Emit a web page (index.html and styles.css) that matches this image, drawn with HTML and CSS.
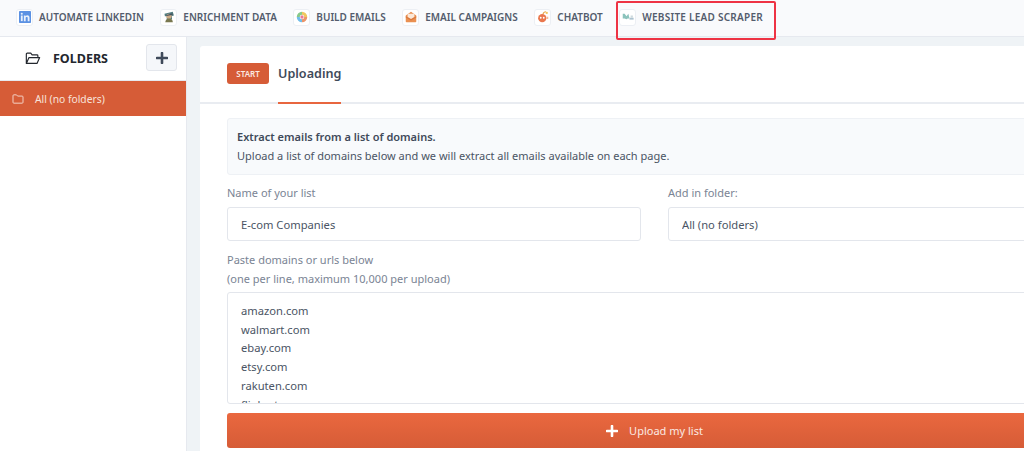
FILE: index.html
```html
<!DOCTYPE html>
<html lang="en">
<head>
<meta charset="utf-8">
<title>Website Lead Scraper</title>
<link rel="stylesheet" href="styles.css">
</head>
<body>
<nav class="topnav">
  <a class="navitem">
    <span class="navicon"><svg viewBox="0 0 16 16"><rect width="16" height="16" rx="1" fill="#4a86e0"/><rect x="2.5" y="6" width="2.4" height="7.5" fill="#e6effb"/><circle cx="3.7" cy="3.7" r="1.4" fill="#e6effb"/><path d="M6.5 6h2.3v1.1c.5-.8 1.4-1.3 2.4-1.3 2 0 2.8 1.3 2.8 3.3v4.4h-2.4V9.6c0-1-.3-1.700-1.200-1.700-1 0-1.500.7-1.500 1.700v3.900H6.500z" fill="#e6effb"/></svg></span>
    AUTOMATE LINKEDIN
  </a>
  <a class="navitem">
    <span class="navicon"><svg viewBox="0 0 16 16"><path d="M2 3.500 13 1l1.500 5-2.500.8V11H5V7L2.500 7z" fill="#3f6f73"/><circle cx="8" cy="7" r="3.500" fill="#c9a27a"/><path d="M3 15c.5-4 2.500-5 5-5s5 1 5 5z" fill="#6b6a3e"/><path d="M4 5.500 12.500 3l.5 2-8 1.500z" fill="#33424f"/></svg></span>
    ENRICHMENT DATA
  </a>
  <a class="navitem">
    <span class="navicon"><svg viewBox="0 0 16 16"><path d="M8 1a7 7 0 0 1 7 7h-4a3 3 0 0 0-3-3z" fill="#efc14d"/><path d="M15 8a7 7 0 0 1-7 7v-4a3 3 0 0 0 3-3z" fill="#e98a5a"/><path d="M8 15a7 7 0 0 1-7-7h4a3 3 0 0 0 3 3z" fill="#62b7e8"/><path d="M1 8a7 7 0 0 1 7-7v4a3 3 0 0 0-3 3z" fill="#7cc47f"/><circle cx="8" cy="8" r="2.200" fill="#e56c8a"/></svg></span>
    BUILD EMAILS
  </a>
  <a class="navitem">
    <span class="navicon"><svg viewBox="0 0 16 16"><path d="M1 6 8 1l7 5v8a1 1 0 0 1-1 1H2a1 1 0 0 1-1-1z" fill="#e8843f"/><path d="M3.500 3.500h9V8L8 10.500 3.500 8z" fill="#fbe6d4"/><path d="M1 7l7 4 7-4v1.500l-7 4-7-4z" fill="#d46a2b"/></svg></span>
    EMAIL CAMPAIGNS
  </a>
  <a class="navitem">
    <span class="navicon"><svg viewBox="0 0 16 16"><circle cx="7" cy="9.500" r="5.500" fill="#e8693a"/><circle cx="5" cy="9" r="1.200" fill="#fff"/><circle cx="9" cy="9" r="1.200" fill="#fff"/><path d="M8 4c.5-2 2-3 4-3" stroke="#e8a03a" stroke-width="1.500" fill="none"/><circle cx="13" cy="2.500" r="1.500" fill="#efc14d"/><path d="M12.500 7.500h2.500v3h-2z" fill="#f2b08a"/></svg></span>
    CHATBOT
  </a>
  <a class="navitem navitem-active">
    <span class="navicon"><svg viewBox="0 0 16 16"><path d="M1 3.500h2.500L6 7l2.500-3.500L10 10H7.500L6 11 3.500 10H1z" fill="#7fbdb5"/><path d="M10 9h5.500v2.500H10z" fill="#a4bccb"/><path d="M11.500 6h3v3h-3z" fill="#c9d6db"/></svg></span>
    WEBSITE LEAD SCRAPER
  </a>
</nav>
<div class="highlight"></div>
<div class="layout">
  <aside class="sidebar">
    <div class="side-head">
      <svg class="folder-open" viewBox="0 0 18 14" width="16" height="13"><path d="M1.500 12.500V2a1 1 0 0 1 1-1h4l1.500 2h5.500a1 1 0 0 1 1 1v1.500M1.500 12.500 4.500 6h12l-3 6.500z" fill="none" stroke="#23272e" stroke-width="1.300" stroke-linejoin="round"/></svg>
      <span class="side-title">FOLDERS</span>
      <button class="add-btn" aria-label="Add folder"><svg viewBox="0 0 12 12" width="12" height="12"><path d="M6 1v10M1 6h10" stroke="#3f4a5a" stroke-width="2.600" stroke-linecap="round"/></svg></button>
    </div>
    <div class="folder-row">
      <svg viewBox="0 0 14 12" width="12" height="10"><path d="M1 10V2a1 1 0 0 1 1-1h3.200l1.300 1.500H12a1 1 0 0 1 1 1V10a1 1 0 0 1-1 1H2a1 1 0 0 1-1-1z" fill="none" stroke="#f6dcd2" stroke-width="1.100"/></svg>
      <span>All (no folders)</span>
    </div>
  </aside>
  <main class="content">
    <section class="card">
      <header class="card-head">
        <span class="badge">START</span>
        <span class="tab">Uploading</span>
      </header>
      <div class="card-body">
        <div class="notice">
          <strong>Extract emails from a list of domains.</strong>
          <span>Upload a list of domains below and we will extract all emails available on each page.</span>
        </div>
        <div class="form-row">
          <label class="field name-field">
            <span class="label">Name of your list</span>
            <input class="control" type="text" value="E-com Companies">
          </label>
          <label class="field folder-field">
            <span class="label">Add in folder:</span>
            <input class="control" type="text" value="All (no folders)">
          </label>
        </div>
        <div class="label paste-label">Paste domains or urls below<br>(one per line, maximum 10,000 per upload)</div>
        <div class="domains">amazon.com<br>walmart.com<br>ebay.com<br>etsy.com<br>rakuten.com<br>flipkart.com</div>
        <button class="upload"><svg viewBox="0 0 12 12" width="12" height="12"><path d="M6 1v10M1 6h10" stroke="#fff" stroke-width="2.600" stroke-linecap="round"/></svg><span>Upload my list</span></button>
      </div>
    </section>
  </main>
</div>
</body>
</html>
```
FILE: styles.css
```css
* { box-sizing: border-box; }
html, body { margin: 0; height: 451px; overflow: hidden; }
body {
  position: relative;
  font-family: "Noto Sans", "Open Sans", sans-serif;
  color: #4a5464;
  background: #eff3f6;
  width: 1024px;
}
.topnav {
  display: flex;
  height: 37px;
  align-items: center;
  padding: 0 0 2px 16px;
  gap: 16.500px;
  background: #f9fafc;
  border-bottom: 1px solid #e6e9ef;
}
.navitem {
  display: flex;
  align-items: center;
  gap: 6px;
  font-size: 10px;
  font-weight: 600;
  color: #535c6c;
  white-space: nowrap;
}
.navitem-active { letter-spacing: .25px; }
.navicon {
  width: 17px;
  height: 17px;
  display: flex;
  align-items: center;
  justify-content: center;
  background: #fff;
  border: 1px solid #eceff4;
  border-radius: 3px;
}
.navicon svg { width: 12px; height: 12px; opacity: .9; }
.highlight {
  position: absolute;
  left: 616px;
  top: 1px;
  width: 160px;
  height: 39px;
  border: 2px solid #ee3344;
  border-radius: 2px;
}
.layout { display: flex; height: 414px; }
.sidebar {
  width: 187px;
  flex: none;
  background: #fff;
  border-right: 1px solid #e6e9ef;
}
.side-head {
  display: flex;
  align-items: center;
  height: 43px;
  padding: 0 9px 2px 25px;
}
.folder-open { margin-top: 1px; }
.side-title {
  margin-left: 12px;
  margin-top: 2px;
  font-size: 12.500px;
  font-weight: 700;
  color: #23272e;
}
.add-btn {
  margin-left: auto;
  width: 31px;
  height: 27px;
  padding: 0;
  display: flex;
  align-items: center;
  justify-content: center;
  background: #f5f7fa;
  border: 1px solid #e3e6ec;
  border-radius: 3px;
}
.folder-row {
  display: flex;
  align-items: center;
  gap: 11px;
  height: 36px;
  padding-left: 12px;
  background: #d65c37;
  color: #f8e3da;
  font-size: 10.300px;
  border-top: 1px solid #e6e9ef;
}
.content { flex: 1; min-width: 0; padding: 9px 0 0 13px; }
.card { width: 900px; min-height: 420px; background: #fff; border-radius: 3px 0 0 0; }
.card-head {
  display: flex;
  align-items: center;
  gap: 9px;
  height: 58px;
  padding: 0 0 0 27px;
  border-bottom: 2px solid #e9ecf1;
  position: relative;
}
.badge {
  padding: 0;
  width: 42px;
  height: 21px;
  line-height: 21px;
  text-align: center;
  background: #d65c37;
  color: #fbe9e2;
  border-radius: 3px;
  font-size: 8px;
  font-weight: 600;
  margin-bottom: 2px;
}
.tab {
  position: relative;
  align-self: stretch;
  display: flex;
  align-items: center;
  padding-bottom: 2px;
  font-size: 12.600px;
  font-weight: 600;
  color: #3f4a5a;
}
.tab::after {
  content: "";
  position: absolute;
  left: 0;
  right: 0;
  bottom: -2px;
  height: 2px;
  background: #e8663f;
}
.card-body { padding: 14px 0 0 27px; }
.notice {
  display: flex;
  flex-direction: column;
  justify-content: center;
  gap: 3px;
  height: 57px;
  padding-left: 9px;
  background: #f8fafc;
  border: 1px solid #eef1f5;
  border-radius: 3px;
  font-size: 11px;
  line-height: 16px;
  color: #4a5464;
}
.notice strong { font-weight: 600; color: #3f4a5a; }
.form-row { display: flex; gap: 27px; margin-top: 9px; }
.field { display: flex; flex-direction: column; }
.name-field { width: 414px; }
.folder-field { width: 400px; }
.label { font-size: 11px; line-height: 18px; color: #7a8494; }
.field .label { margin-bottom: 5px; }
.control {
  height: 34px;
  padding: 0 13px;
  border: 1px solid #e3e6ec;
  border-radius: 3px;
  font: 11.200px "Noto Sans", sans-serif;
  color: #4a5464;
  background: #fff;
}
.paste-label { margin-top: 9px; line-height: 19px; }
.domains {
  height: 112px;
  margin-top: 4px;
  padding: 9px 13px;
  overflow: hidden;
  border: 1px solid #e3e6ec;
  border-radius: 3px;
  font-size: 11.200px;
  line-height: 18.700px;
  color: #4a5464;
}
.upload {
  display: flex;
  align-items: center;
  justify-content: center;
  gap: 11px;
  width: 100%;
  height: 35px;
  margin-top: 9px;
  padding: 0 18px 0 0;
  border: 0;
  border-radius: 3px;
  background: linear-gradient(#ea683f, #d65c37);
  color: #fbe9e2;
  font: 11px "Noto Sans", sans-serif;
}
```
